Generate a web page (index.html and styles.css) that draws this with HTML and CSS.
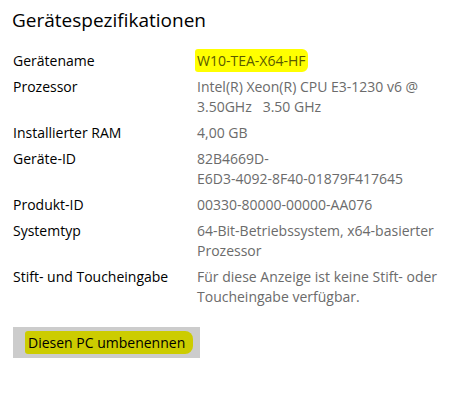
FILE: index.html
```html
<!DOCTYPE html>
<html lang="de">
<head>
<meta charset="utf-8">
<link rel="stylesheet" href="styles.css">
</head>
<body>
<div class="page">
  <h1 class="title">Gerätespezifikationen</h1>
  <div class="specs">
    <div class="label">Gerätename</div>
    <div class="value"><span class="mark">W10-TEA-X64-HF</span></div>
    <div class="label">Prozessor</div>
    <div class="value">Intel(R) Xeon(R) CPU E3-1230 v6 @<br>3.50GHz&nbsp;&nbsp;&nbsp;3.50 GHz</div>
    <div class="label">Installierter RAM</div>
    <div class="value">4,00 GB</div>
    <div class="label">Geräte-ID</div>
    <div class="value">82B4669D-<br>E6D3-4092-8F40-01879F417645</div>
    <div class="label">Produkt-ID</div>
    <div class="value">00330-80000-00000-AA076</div>
    <div class="label">Systemtyp</div>
    <div class="value">64-Bit-Betriebssystem, x64-basierter<br>Prozessor</div>
    <div class="label">Stift- und Toucheingabe</div>
    <div class="value">Für diese Anzeige ist keine Stift- oder<br>Toucheingabe verfügbar.</div>
  </div>
  <button class="btn" type="button"><span class="btn-mark">Diesen PC umbenennen</span></button>
</div>
</body>
</html>
```
FILE: styles.css
```css
html, body {
  margin: 0;
  padding: 0;
  background: #ffffff;
}
.page {
  padding: 6px 0 0 13px;
  font-family: "Open Sans", "Noto Sans", sans-serif;
  color: #000;
}
.title {
  margin: 0 0 0 -1px;
  font-size: 19px;
  font-weight: 400;
  line-height: 28px;
}
.specs {
  display: grid;
  grid-template-columns: 184px 1fr;
  row-gap: 6px;
  margin-top: 17px;
  font-size: 14px;
  line-height: 20px;
}
.label {
  color: #000;
}
.value {
  color: #6b6b6b;
}
.mark {
  background: #ffff00;
  color: #5a5a00;
  padding: 2px 3px 2px 2px;
  margin-left: -2px;
  border-radius: 3px 6px 6px 3px;
}
.btn {
  margin-top: 20px;
  display: block;
  width: 187px;
  height: 31px;
  background: #cccccc;
  border: 0;
  padding: 0 0 0 12px;
  text-align: left;
  font-family: "Open Sans", "Noto Sans", sans-serif;
  font-size: 14px;
  color: #000;
}
.btn-mark {
  background: #cccc00;
  padding: 2px 8px 2px 3px;
  border-radius: 3px 8px 8px 3px;
}
```
